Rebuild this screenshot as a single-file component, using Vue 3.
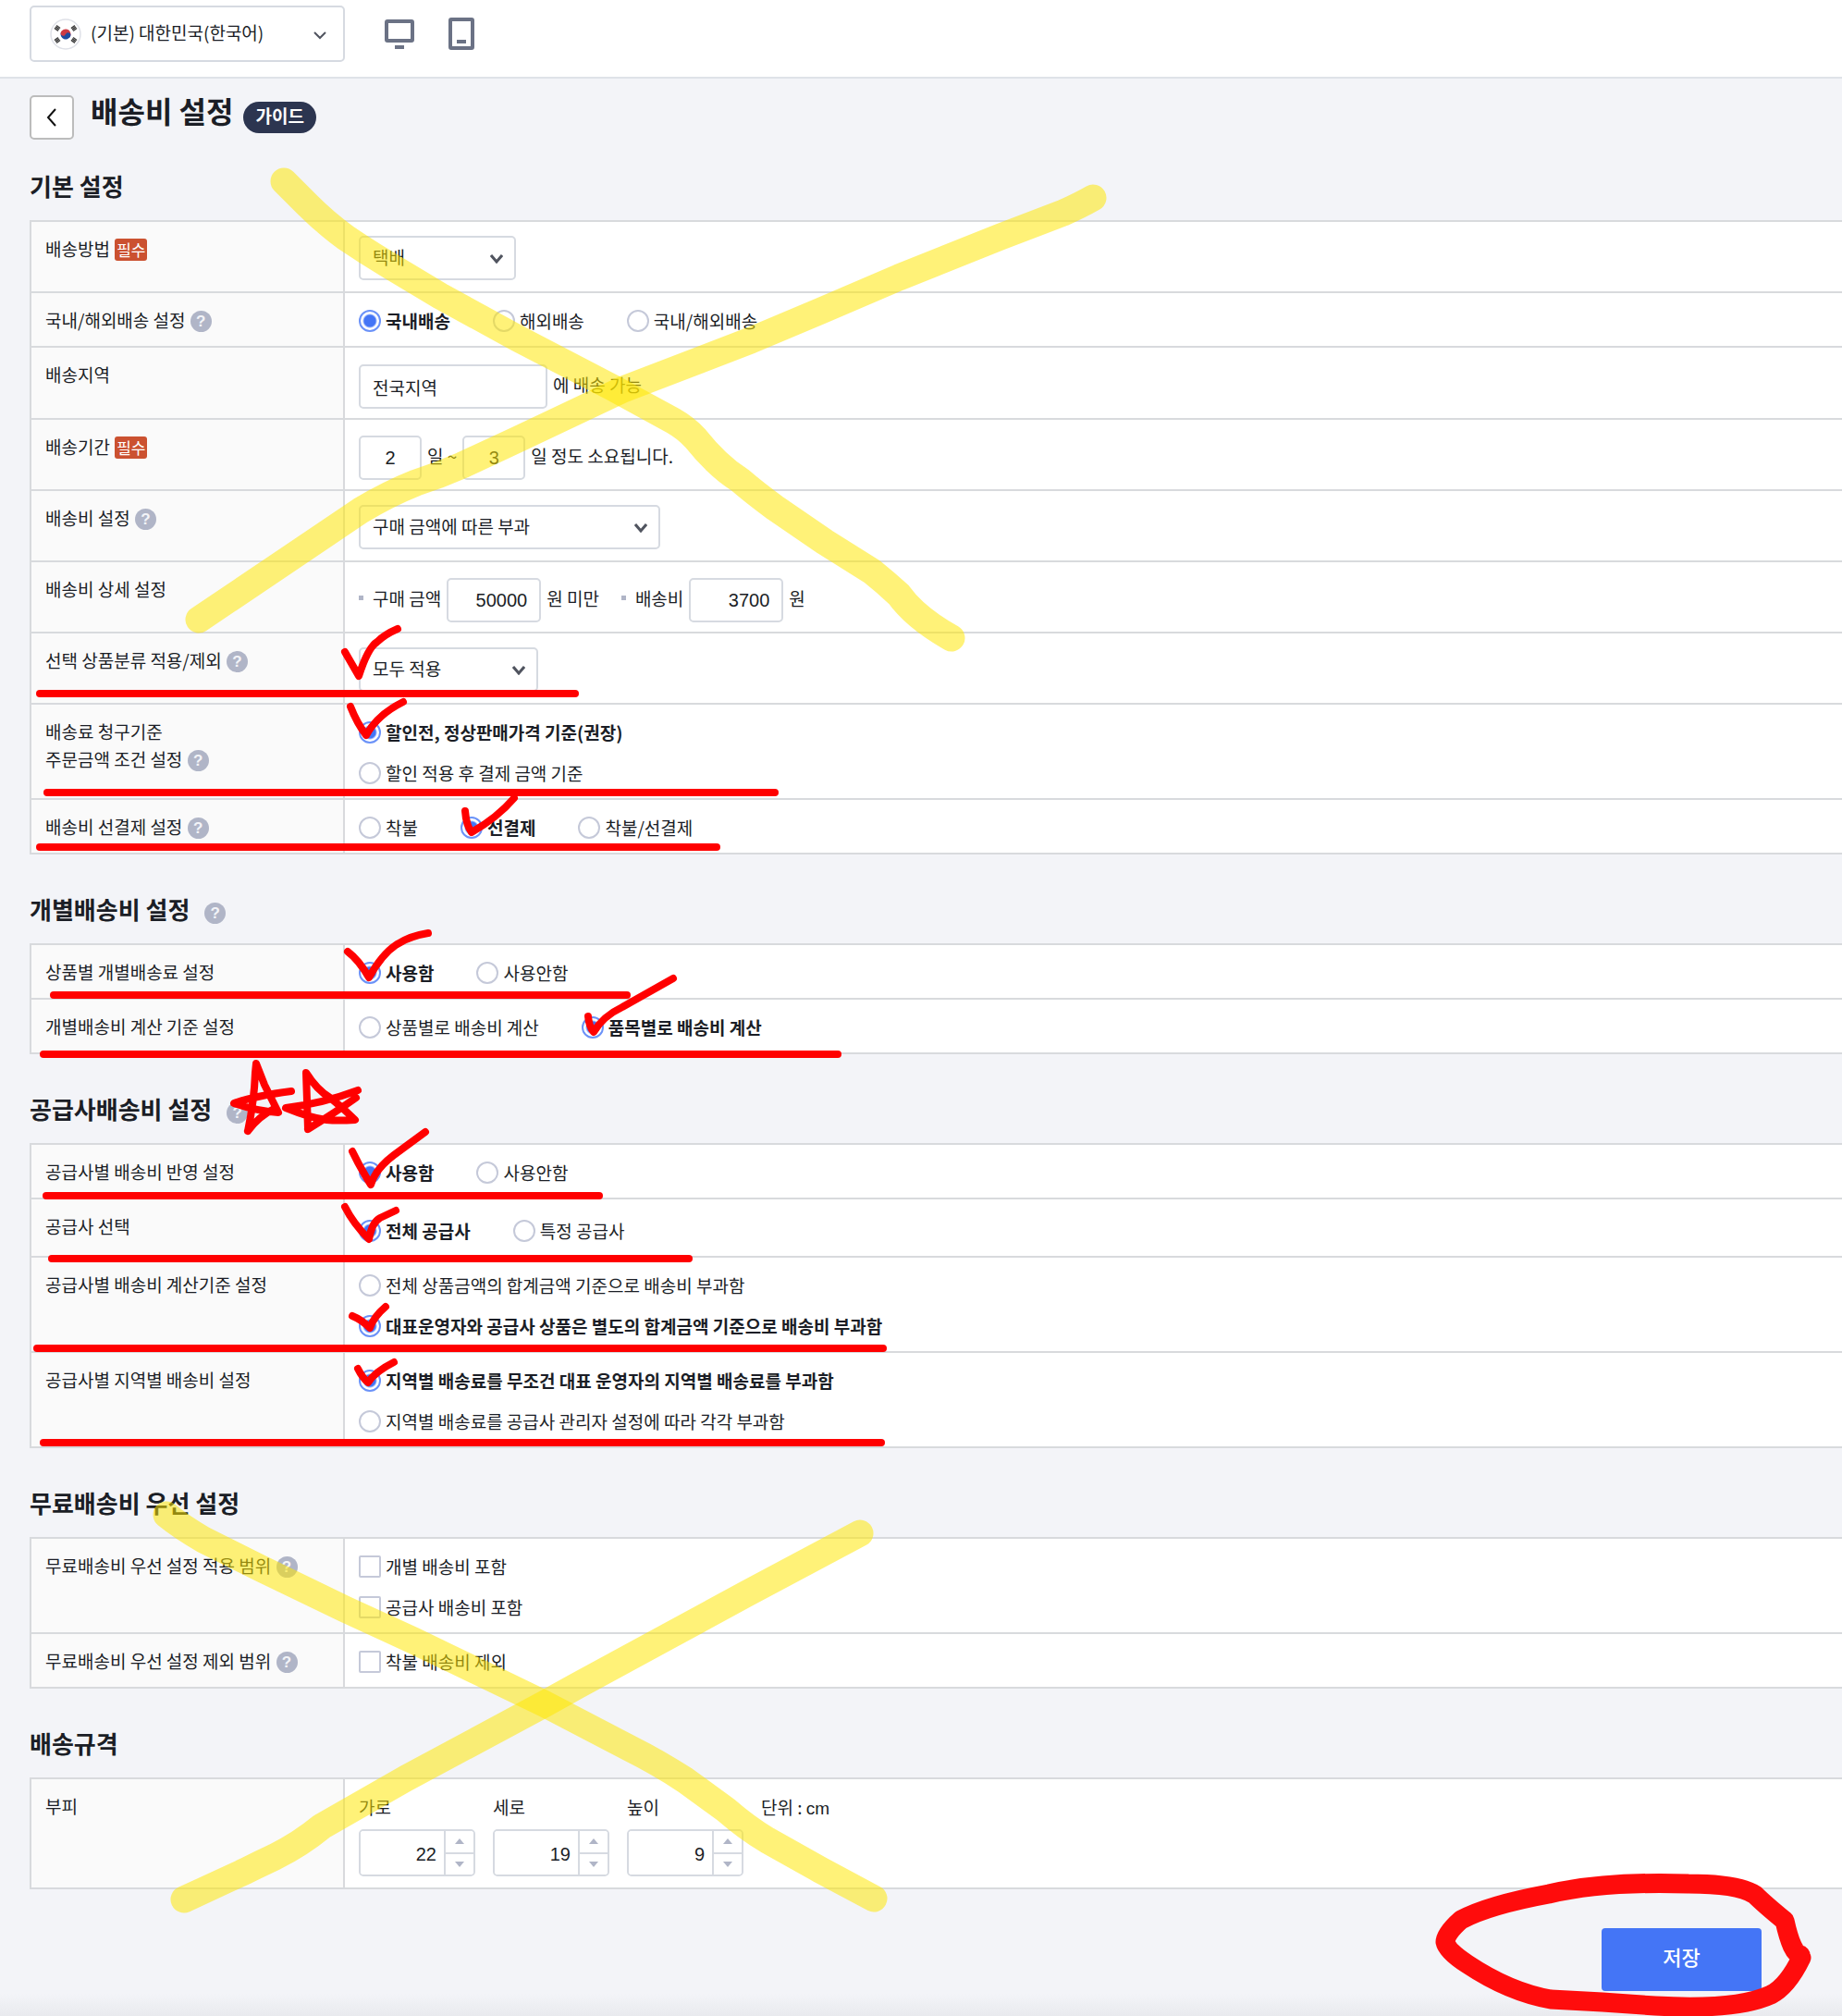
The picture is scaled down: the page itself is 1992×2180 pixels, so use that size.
<template>
  <div class="page">
    <header class="topbar">
      <div class="shop-select">
        <svg class="flag" viewBox="0 0 34 34" aria-hidden="true">
          <circle cx="17" cy="17" r="16" fill="#fff" stroke="#dfe1e8" stroke-width="1.5" />
          <g transform="rotate(20 17 17)">
            <path d="M11.5 17a5.5 5.5 0 0 1 11 0z" fill="#cd3a44" />
            <path d="M11.5 17a5.5 5.5 0 0 0 11 0z" fill="#1d4ba0" />
            <circle cx="14.2" cy="17" r="2.7" fill="#cd3a44" />
            <circle cx="19.8" cy="17" r="2.7" fill="#1d4ba0" />
          </g>
          <g stroke="#3c3c3c" stroke-width="5" stroke-dasharray="1.5 .3">
            <path d="M6.500 12.500L9.500 8.500" />
            <path d="M24.500 8.500L27.500 12.500" />
            <path d="M6.500 21.500L9.500 25.500" />
            <path d="M24.500 25.500L27.500 21.500" />
          </g>
        </svg>
        <select v-model="shop" aria-label="쇼핑몰 선택">
          <option>(기본) 대한민국(한국어)</option>
        </select>
        <svg class="chevron thin" viewBox="0 0 14 10" aria-hidden="true"><path d="M1 2l6 6 6-6" /></svg>
      </div>
      <button class="device" type="button" aria-label="PC">
        <svg width="32" height="36" viewBox="0 0 32 36">
          <rect x="2" y="5" width="28" height="21" rx="1" />
          <path d="M11 33h10" />
        </svg>
      </button>
      <button class="device" type="button" aria-label="모바일">
        <svg width="28" height="36" viewBox="0 0 28 36">
          <rect x="2" y="3" width="24" height="31" rx="1" />
          <path d="M9 27h10" />
        </svg>
      </button>
    </header>

    <main>
      <div class="page-title">
        <button class="back" type="button" aria-label="뒤로">
          <svg width="14" height="22" viewBox="0 0 14 22"><path d="M11 2L3 11l8 9" /></svg>
        </button>
        <h1>배송비 설정</h1>
        <a class="guide" href="#">가이드</a>
      </div>

      <!-- 기본 설정 -->
      <h2>기본 설정</h2>
      <table>
        <tbody>
          <tr>
            <th scope="row"><label for="method">배송방법</label> <span class="required">필수</span></th>
            <td>
              <div class="select w-s">
                <select id="method" v-model="form.method"><option>택배</option></select>
                <svg class="chevron" viewBox="0 0 14 10"><path d="M1 1l6 7 6-7" /></svg>
              </div>
            </td>
          </tr>
          <tr>
            <th scope="row">국내/해외배송 설정 <button class="help" type="button">?</button></th>
            <td>
              <div class="options">
                <label v-for="o in options.area" :key="o"><input v-model="form.area" type="radio" name="area" :value="o"><span>{{ o }}</span></label>
              </div>
            </td>
          </tr>
          <tr>
            <th scope="row"><label for="region">배송지역</label></th>
            <td class="fields-td tall">
              <div class="fields">
                <input id="region" v-model="form.region" class="text w-region" type="text">
                <span>에 배송 가능</span>
              </div>
            </td>
          </tr>
          <tr>
            <th scope="row"><label for="day-from">배송기간</label> <span class="required">필수</span></th>
            <td class="fields-td">
              <div class="fields">
                <input id="day-from" v-model="form.dayFrom" class="text w-day" type="text">
                <label for="day-to">일 ~</label>
                <input id="day-to" v-model="form.dayTo" class="text w-day" type="text">
                <span>일 정도 소요됩니다.</span>
              </div>
            </td>
          </tr>
          <tr>
            <th scope="row"><label for="fee">배송비 설정</label> <button class="help" type="button">?</button></th>
            <td>
              <div class="select w-l">
                <select id="fee" v-model="form.fee"><option>구매 금액에 따른 부과</option></select>
                <svg class="chevron" viewBox="0 0 14 10"><path d="M1 1l6 7 6-7" /></svg>
              </div>
            </td>
          </tr>
          <tr>
            <th scope="row">배송비 상세 설정</th>
            <td class="fields-td">
              <div class="fields">
                <label class="bullet" for="price">구매 금액</label>
                <input id="price" v-model="form.price" class="text w-money" type="text">
                <span>원 미만</span>
                <label class="bullet next" for="cost">배송비</label>
                <input id="cost" v-model="form.cost" class="text w-money" type="text">
                <span>원</span>
              </div>
            </td>
          </tr>
          <tr>
            <th scope="row"><label for="category">선택 상품분류 적용/제외</label> <button class="help" type="button">?</button></th>
            <td>
              <div class="select w-m">
                <select id="category" v-model="form.category"><option>모두 적용</option></select>
                <svg class="chevron" viewBox="0 0 14 10"><path d="M1 1l6 7 6-7" /></svg>
              </div>
            </td>
          </tr>
          <tr>
            <th scope="row">배송료 청구기준<br>주문금액 조건 설정 <button class="help" type="button">?</button></th>
            <td>
              <div class="options column">
                <label v-for="o in options.charge" :key="o"><input v-model="form.charge" type="radio" name="charge" :value="o"><span>{{ o }}</span></label>
              </div>
            </td>
          </tr>
          <tr>
            <th scope="row">배송비 선결제 설정 <button class="help" type="button">?</button></th>
            <td>
              <div class="options">
                <label v-for="o in options.prepay" :key="o"><input v-model="form.prepay" type="radio" name="prepay" :value="o"><span>{{ o }}</span></label>
              </div>
            </td>
          </tr>
        </tbody>
      </table>

      <!-- 개별 / 공급사 -->
      <template v-for="s in sections" :key="s.title">
        <h2>{{ s.title }} <button class="help" type="button">?</button></h2>
        <table>
          <tbody>
            <tr v-for="r in s.rows" :key="r.key">
              <th scope="row">{{ r.label }}</th>
              <td :class="{ loose: r.loose }">
                <div class="options" :class="{ column: r.column }">
                  <label v-for="o in options[r.key]" :key="o"><input v-model="form[r.key]" type="radio" :name="r.key" :value="o"><span>{{ o }}</span></label>
                </div>
              </td>
            </tr>
          </tbody>
        </table>
      </template>

      <!-- 무료배송비 -->
      <h2>무료배송비 우선 설정</h2>
      <table>
        <tbody>
          <tr v-for="r in freeRows" :key="r.label">
            <th scope="row">{{ r.label }} <button class="help" type="button">?</button></th>
            <td>
              <div class="options column">
                <label v-for="o in r.options" :key="o"><input v-model="form.free" type="checkbox" :value="o"><span>{{ o }}</span></label>
              </div>
            </td>
          </tr>
        </tbody>
      </table>

      <h2>배송규격</h2>
      <table>
        <tbody>
          <tr>
            <th scope="row">부피</th>
            <td>
              <div class="sizes">
                <div v-for="d in dims" :key="d.id" class="size">
                  <label :for="d.id">{{ d.label }}</label>
                  <div class="spinner">
                    <input :id="d.id" v-model.number="d.value" type="text">
                    <div class="steps">
                      <button type="button" :aria-label="d.label + ' 증가'" @click="d.value++">
                        <svg width="10" height="6" viewBox="0 0 10 6"><path d="M0 6l5-6 5 6z" /></svg>
                      </button>
                      <button type="button" :aria-label="d.label + ' 감소'" @click="d.value--">
                        <svg width="10" height="6" viewBox="0 0 10 6"><path d="M0 0l5 6 5-6z" /></svg>
                      </button>
                    </div>
                  </div>
                </div>
                <span>단위 : <span class="unit">cm</span></span>
              </div>
            </td>
          </tr>
        </tbody>
      </table>
    </main>

    <footer>
      <button class="save" type="button">저장</button>
    </footer>

    <!-- pen and highlighter marks over the form -->
    <svg class="marks" viewBox="0 0 1992 2180" aria-hidden="true">
      <path v-for="d in highlights" :key="d" class="highlight" :d="d" />
      <path v-for="[x1, x2, y] in underlines" :key="y" class="pen" :d="`M${x1} ${y}H${x2}`" />
      <path v-for="d in penMarks" :key="d" class="pen" :d="d" />
      <path class="circle" :d="saveCircle" />
    </svg>
  </div>
</template>

<script setup>
import { ref, reactive } from "vue";

const shop = ref("(기본) 대한민국(한국어)");

const options = {
  area: ["국내배송", "해외배송", "국내/해외배송"],
  charge: ["할인전, 정상판매가격 기준(권장)", "할인 적용 후 결제 금액 기준"],
  prepay: ["착불", "선결제", "착불/선결제"],
  itemFee: ["사용함", "사용안함"],
  itemBase: ["상품별로 배송비 계산", "품목별로 배송비 계산"],
  supplierFee: ["사용함", "사용안함"],
  supplier: ["전체 공급사", "특정 공급사"],
  supplierBase: [
    "전체 상품금액의 합계금액 기준으로 배송비 부과함",
    "대표운영자와 공급사 상품은 별도의 합계금액 기준으로 배송비 부과함"
  ],
  supplierArea: [
    "지역별 배송료를 무조건 대표 운영자의 지역별 배송료를 부과함",
    "지역별 배송료를 공급사 관리자 설정에 따라 각각 부과함"
  ]
};

const form = reactive({
  method: "택배",
  area: "국내배송",
  region: "전국지역",
  dayFrom: "2",
  dayTo: "3",
  fee: "구매 금액에 따른 부과",
  price: "50000",
  cost: "3700",
  category: "모두 적용",
  charge: options.charge[0],
  prepay: "선결제",
  itemFee: "사용함",
  itemBase: options.itemBase[1],
  supplierFee: "사용함",
  supplier: "전체 공급사",
  supplierBase: options.supplierBase[1],
  supplierArea: options.supplierArea[0],
  free: []
});

const sections = [
  {
    title: "개별배송비 설정",
    rows: [
      { key: "itemFee", label: "상품별 개별배송료 설정" },
      { key: "itemBase", label: "개별배송비 계산 기준 설정" }
    ]
  },
  {
    title: "공급사배송비 설정",
    rows: [
      { key: "supplierFee", label: "공급사별 배송비 반영 설정" },
      { key: "supplier", label: "공급사 선택", loose: true },
      { key: "supplierBase", label: "공급사별 배송비 계산기준 설정", column: true },
      { key: "supplierArea", label: "공급사별 지역별 배송비 설정", column: true }
    ]
  }
];

const freeRows = [
  { label: "무료배송비 우선 설정 적용 범위", options: ["개별 배송비 포함", "공급사 배송비 포함"] },
  { label: "무료배송비 우선 설정 제외 범위", options: ["착불 배송비 제외"] }
];

const dims = reactive([
  { id: "dim-w", label: "가로", value: 22 },
  { id: "dim-d", label: "세로", value: 19 },
  { id: "dim-h", label: "높이", value: 9 }
]);

const highlights = [
  "M307 196Q318 207 332 221Q352 241 374 257Q396 272 421 287L476 320L560 366L662 419L728 455Q742 463 752 474Q776 504 800 519Q815 532 838 549L892 586L943 618Q958 630 972 643Q990 668 1029 690",
  "M1182 214Q1168 222 1150 230L1082 256L972 300L888 336L812 368L674 421L560 475L500 503Q475 514 450 522Q420 534 390 552L310 606L215 670",
  "M180 1638Q196 1651 220 1665L282 1696L373 1740L447 1774L588 1842L680 1890Q712 1906 741 1925L785 1957Q808 1977 830 1990L887 2022L945 2053",
  "M930 1658L808 1723L624 1823L588 1843L439 1923L348 1975Q325 1994 297 2008Q282 2015 266 2023L199 2054"
];

// [x1, x2, y]
const underlines = [
  [43, 622, 750],
  [51, 838, 857],
  [43, 775, 916],
  [58, 678, 1076],
  [47, 906, 1140],
  [50, 648, 1293],
  [56, 745, 1361],
  [40, 955, 1458],
  [47, 953, 1560]
];

const penMarks = [
  "M373 705L388 731Q398 700 408 694Q416 686 430 680",
  "M379 764Q386 782 396 795Q408 773 436 759",
  "M503 877Q504 892 510 900Q538 884 556 863",
  "M376 1029Q388 1038 399 1057Q413 1032 428 1022Q443 1012 463 1009",
  "M636 1099Q637 1110 642 1116Q652 1099 673 1089L728 1058",
  "M381 1245Q389 1262 401 1281Q406 1264 426 1249L460 1224",
  "M373 1305Q382 1323 399 1340Q402 1322 411 1317L428 1309",
  "M381 1423Q391 1427 400 1436Q404 1424 417 1413",
  "M387 1480Q392 1490 398 1495Q406 1483 426 1473",
  "M268 1223Q275 1190 276 1160L277 1150L286 1173L301 1203Q276 1201 253 1193Q276 1185 315 1180M268 1223Q280 1207 298 1198",
  "M333 1221Q332 1190 331 1160Q343 1179 357 1187Q371 1198 384 1211Q365 1212 353 1211Q336 1209 309 1198Q350 1193 387 1179M385 1187Q364 1202 333 1221"
];

const saveCircle =
  "M1947 2114Q1938 2113 1930 2077Q1908 2059 1898 2049Q1880 2037 1826 2037Q1735 2034 1675 2048Q1610 2060 1580 2076Q1563 2091 1563 2100Q1565 2110 1587 2124Q1632 2154 1677 2162L1733 2165L1790 2169Q1878 2174 1915 2157Q1933 2148 1948 2117";
</script>

<style>
body {
  margin: 0;
  background: #f3f4f8;
}
</style>

<style scoped>
.page {
  position: relative;
  min-height: 100vh;
  box-sizing: border-box;
  overflow: hidden;
  background: linear-gradient(to top, #e9eaee, #f3f4f8 24px);
  color: #1b1e26;
  font-family: "Noto Sans CJK KR", "Noto Sans", sans-serif;
  font-size: 19px;
  line-height: 30px;
}
button,
input,
select {
  box-sizing: border-box;
  margin: 0;
  color: inherit;
  font: inherit;
}
.topbar {
  display: flex;
  align-items: flex-start;
  padding: 6px 32px 16px;
  background: #fff;
  border-bottom: 2px solid #dfe3e8;
}
.shop-select,
.select {
  position: relative;
}
.shop-select {
  width: 341px;
  margin-right: 43px;
}
.shop-select select {
  height: 61px;
  padding: 0 48px 3px 64px;
}
.flag {
  position: absolute;
  left: 22px;
  top: 14px;
  width: 34px;
  height: 34px;
}
select {
  display: block;
  width: 100%;
  height: 48px;
  padding: 0 36px 3px 13px;
  appearance: none;
  background: #fff;
  border: 2px solid #d6dae1;
  border-radius: 5px;
}
.chevron {
  position: absolute;
  right: 14px;
  top: 20px;
  width: 14px;
  height: 10px;
  fill: none;
  stroke: #50545f;
  stroke-width: 3;
  pointer-events: none;
}
.chevron.thin {
  right: 20px;
  top: 27px;
  stroke-width: 2;
}
.device {
  display: block;
  margin: 12px 37px 0 0;
  padding: 0;
  background: none;
  border: 0;
}
.device svg {
  display: block;
  fill: none;
  stroke: #6b7285;
  stroke-width: 4;
}
main {
  padding-left: 32px;
}
.page-title {
  display: flex;
  align-items: center;
  padding-top: 18px;
}
.back {
  display: flex;
  align-items: center;
  justify-content: center;
  width: 48px;
  height: 48px;
  padding: 0;
  background: #fff;
  border: 2px solid #bcbcbc;
  border-radius: 5px;
}
.back svg {
  fill: none;
  stroke: #111;
  stroke-width: 2;
}
h1 {
  margin: 0 11px 16px 18px;
  font-size: 32px;
  line-height: 32px;
}
.guide {
  padding: 0 13px 4px;
  border-radius: 17px;
  background: #2c3550;
  color: #fff;
  font-size: 19px;
  font-weight: 700;
  text-decoration: none;
}
h2 {
  margin: 39px 0 17px;
  font-size: 26px;
  line-height: 40px;
}
.page-title + h2 {
  margin-top: 30px;
}
h2 .help {
  margin-left: 10px;
}
table {
  width: 100%;
  border-collapse: separate;
  border-spacing: 0;
  border-top: 2px solid #d8dadd;
  border-left: 2px solid #d8dadd;
  background: #fff;
}
th,
td {
  padding: 15px 15px 12px;
  border-bottom: 2px solid #d8dadd;
  text-align: left;
  vertical-align: top;
}
th {
  box-sizing: border-box;
  width: 339px;
  padding: 14px 0 13px 15px;
  border-right: 2px solid #d8dadd;
  background: #fafafa;
  font-weight: 400;
}
.fields-td {
  padding-top: 17px;
  padding-bottom: 10px;
}
.fields-td.tall {
  padding-top: 18px;
}
.loose {
  padding-top: 19px;
}
.required {
  display: inline-block;
  margin-left: 1px;
  padding: 0 2px;
  border-radius: 3px;
  background: #cb5130;
  color: #fff;
  font-size: 17px;
  line-height: 24px;
}
.help {
  width: 23px;
  height: 23px;
  margin-left: 1px;
  padding: 0;
  border: 0;
  border-radius: 50%;
  background: #b0b5c7;
  color: #f3f4f8;
  font-family: "Liberation Sans", sans-serif;
  font-size: 17px;
  font-weight: 700;
  line-height: 23px;
  text-align: center;
  vertical-align: 1px;
}
.w-s { width: 170px; }
.w-m { width: 194px; }
.w-l { width: 326px; }
.w-region { width: 204px; }
.w-day {
  width: 68px;
  text-align: center;
}
.w-money {
  width: 102px;
  text-align: right;
}
.options {
  display: flex;
  gap: 46px;
}
.options.column {
  flex-direction: column;
  align-items: flex-start;
  gap: 14px;
}
.options label {
  display: flex;
  align-items: center;
  gap: 5px;
}
.options input {
  width: 24px;
  height: 24px;
  appearance: none;
  background: #fff;
  border: 2px solid #c5c9d9;
}
.options input[type="radio"] {
  border-radius: 50%;
}
.options input[type="checkbox"] {
  border-radius: 2px;
}
.options input:checked {
  border-color: #6b92f8;
  background: radial-gradient(circle, #4475f6 6px, #fff 8px);
}
.options input[type="radio"]:checked + span {
  font-weight: 700;
}
.fields {
  display: flex;
  align-items: center;
  gap: 6px;
}
.fields > span,
.fields > label {
  padding-bottom: 5px;
}
.text {
  height: 48px;
  padding: 0 13px;
  border: 2px solid #d6dae1;
  border-radius: 5px;
  background: #fff;
  font-family: "Liberation Sans", "Noto Sans CJK KR", sans-serif;
}
.w-day,
.w-money,
.spinner input {
  font-family: "Liberation Sans", sans-serif;
  font-size: 20px;
}
.bullet {
  display: flex;
  align-items: center;
  gap: 10px;
}
.bullet::before {
  content: "";
  width: 5px;
  height: 5px;
  background: #b0b5c7;
}
.bullet.next {
  margin-left: 18px;
}
.sizes {
  display: flex;
  gap: 19px;
}
.size {
  display: flex;
  flex-direction: column;
  gap: 9px;
}
.spinner {
  display: flex;
  box-sizing: border-box;
  width: 126px;
  height: 51px;
  border: 2px solid #d6dae1;
  border-radius: 5px;
  overflow: hidden;
}
.spinner input {
  flex: 1;
  min-width: 0;
  padding: 3px 8px 0;
  border: 0;
  text-align: right;
}
.steps {
  display: flex;
  flex-direction: column;
  width: 30px;
  border-left: 2px solid #d6dae1;
}
.steps button {
  flex: 1;
  display: flex;
  align-items: center;
  justify-content: center;
  padding: 0;
  border: 0;
  background: #fff;
}
.steps button + button {
  border-top: 2px solid #d6dae1;
}
.steps svg {
  fill: #b0b5c7;
}
.unit {
  font-family: "Liberation Sans", sans-serif;
}
footer {
  display: flex;
  justify-content: flex-end;
  padding: 42px 87px 27px 32px;
}
.save {
  width: 173px;
  height: 68px;
  padding: 0 0 8px;
  border: 0;
  border-radius: 4px;
  background: #4475f6;
  color: #fff;
  font-size: 22px;
  font-weight: 500;
}
.marks {
  position: absolute;
  left: 0;
  top: 0;
  width: 100%;
  pointer-events: none;
}
.marks path {
  fill: none;
  stroke-linecap: round;
  stroke-linejoin: round;
}
.highlight {
  stroke: #ffe600;
  stroke-width: 29;
  stroke-opacity: 0.53;
}
.pen {
  stroke: #f00;
  stroke-width: 8;
}
.circle {
  stroke: #ff0c0c;
  stroke-width: 21;
}
</style>
